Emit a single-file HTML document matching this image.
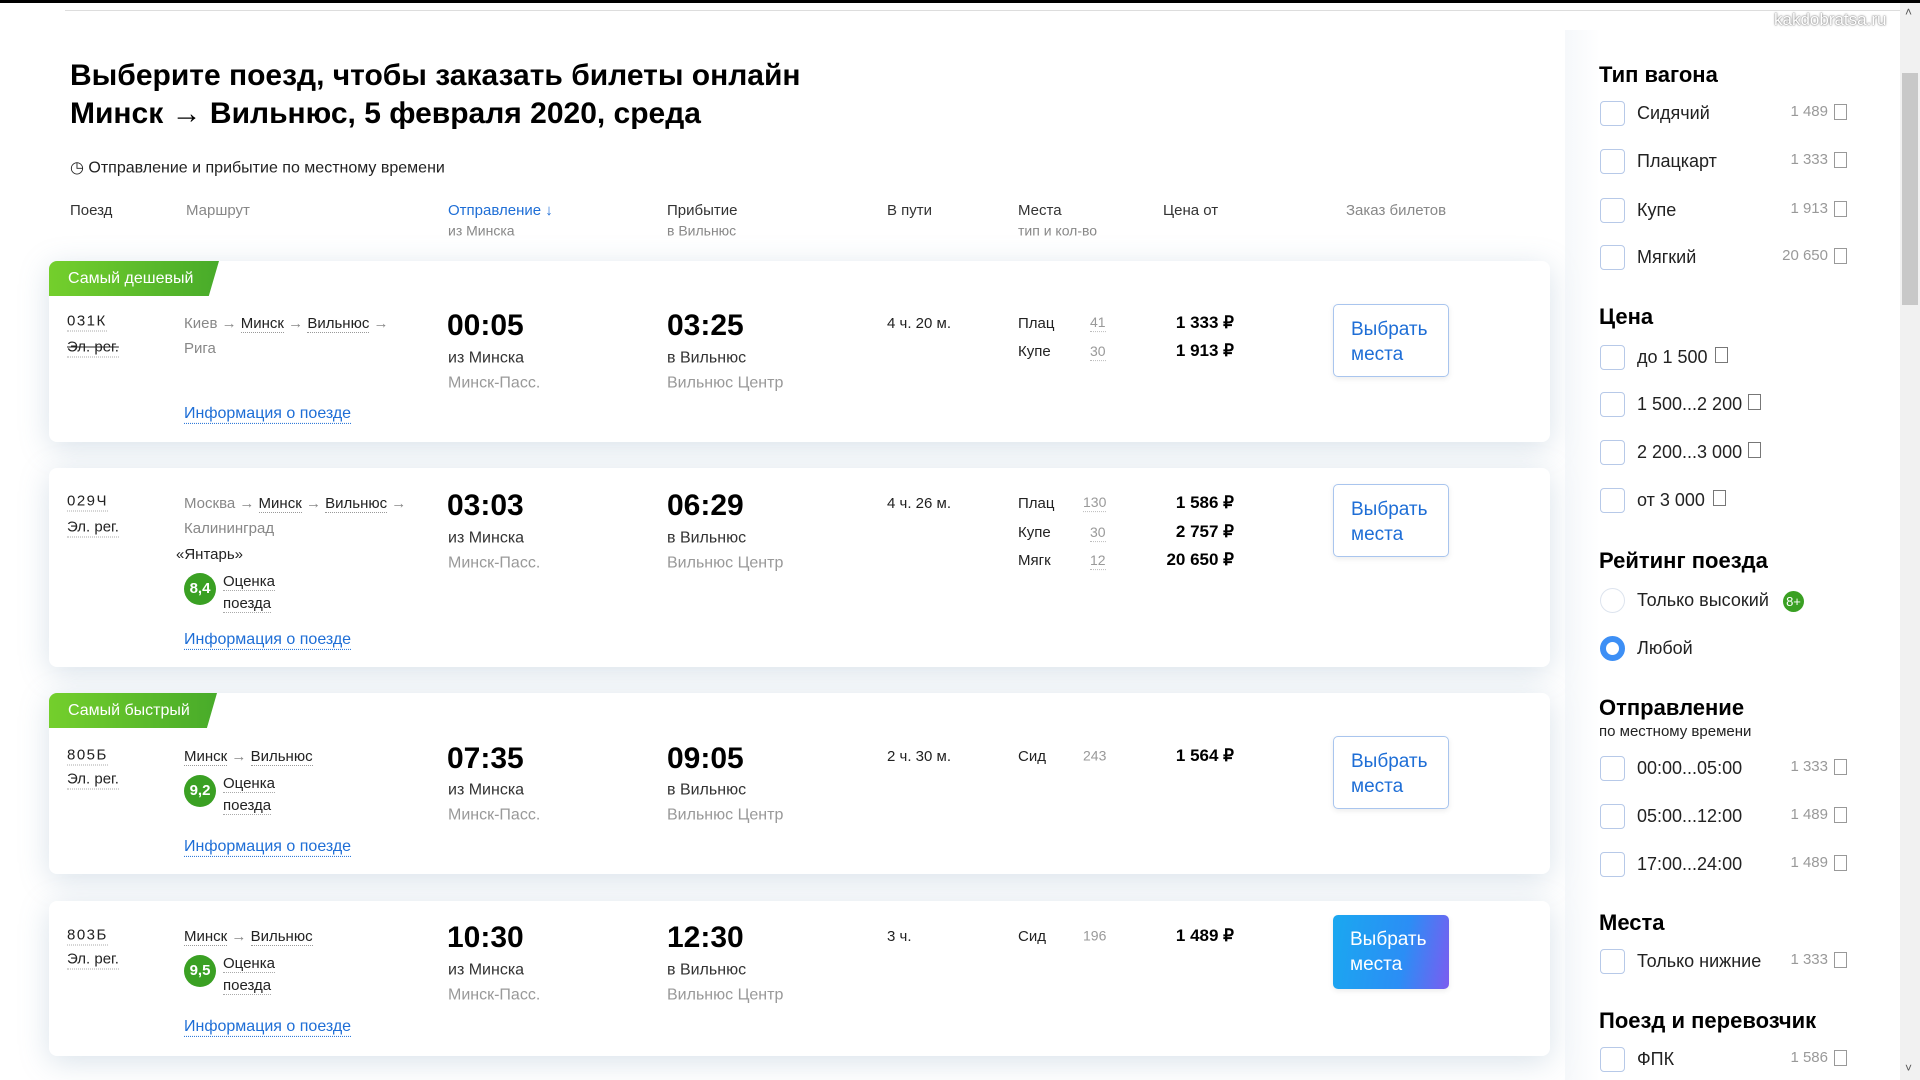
<!DOCTYPE html>
<html><head><meta charset="utf-8"><style>
*{margin:0;padding:0;box-sizing:border-box}
body{width:1920px;height:1080px;overflow:hidden;background:#fff;font-family:"Liberation Sans",sans-serif;color:#000;position:relative}
.c{position:absolute;transform:translateY(-50%);white-space:nowrap;line-height:1.2}
.card{position:absolute;left:49px;width:1501px;background:#fff;border-radius:8px;box-shadow:0 6px 30px rgba(120,150,180,.28)}
.badge{position:absolute;left:49px;height:35px;color:#fff;font-size:16px;line-height:35px;padding-left:19px;background:linear-gradient(90deg,#74cf2c,#48ab2a);border-radius:8px 0 8px 0;clip-path:polygon(0 0,100% 0,94% 100%,0 100%)}
.h{font-size:15px;color:#333}
.sub{font-size:14px;color:#888}
.num{font-size:15px;letter-spacing:1.5px;color:#222;border-bottom:1px dotted #aaa}
.reg{font-size:15px;color:#222;border-bottom:1px dotted #aaa}
.rt{font-size:15px;color:#888}
.rt u{text-decoration:none;color:#222;border-bottom:1px dotted #999}
.t{font-size:30px;font-weight:bold;color:#000}
.s1{font-size:16px;color:#333}
.s2{font-size:16px;color:#999}
.link{font-size:16px;color:#1e6ed6;border-bottom:1px dotted #1e6ed6}
.dur{font-size:15px;color:#222}
.pl{font-size:15px;color:#222}
.cnt{font-size:14px;color:#999;border-bottom:1px dotted #bbb}
.pr{font-size:17px;font-weight:bold;text-align:right;width:118px}
.btn{position:absolute;left:1333px;width:116px;border:1px solid #a9c5ee;border-radius:5px;color:#1e6ed6;font-size:19px;line-height:25px;padding:12px 0 0 17px;box-shadow:0 2px 6px rgba(0,0,0,.08)}
.rate{position:absolute;width:32px;height:32px;border-radius:50%;background:#3aa023;color:#fff;font-weight:bold;font-size:15px;text-align:center;line-height:32px}
.ev{font-size:15px;color:#222;line-height:22px;position:absolute}
.ev span{border-bottom:1px dotted #aaa}
.sh{font-size:22px;font-weight:bold}
.cb{position:absolute;left:1600px;width:25px;height:25px;border:1.5px solid #b7c9e8;border-radius:4px}
.lb{font-size:18px;color:#222;left:1637px}
.pp{font-size:15px;color:#999;right:92px;left:auto}
.ic{position:absolute;width:13px;height:16px;border:1px solid #999;left:1834px;background:#fff}
.ic2{position:absolute;width:13px;height:16px;border:1px solid #777}
</style></head><body>
<div style="position:absolute;left:0;top:0;width:1920px;height:3px;background:#000"></div>
<div style="position:absolute;left:65px;top:10px;width:1835px;height:1px;background:#ddd"></div>
<div style="position:absolute;left:1900px;top:3px;width:20px;height:1077px;background:#f1f1f1"></div>
<div style="position:absolute;left:1902px;top:73px;width:16px;height:232px;background:#c8c8c8"></div>
<div class="c" style="left:1905px;top:12px;font-size:12px;color:#555">˄</div>
<div class="c" style="left:1905px;top:1068px;font-size:12px;color:#555">˅</div>
<div class="c" style="left:1774px;top:20px;font-size:17px;color:#fff;text-shadow:0 0 2px #777,0 0 1px #777">kakdobratsa.ru</div>

<div class="c" style="left:70px;top:76px;font-size:30px;font-weight:bold">Выберите поезд, чтобы заказать билеты онлайн</div>
<div class="c" style="left:70px;top:114px;font-size:30px;font-weight:bold">Минск → Вильнюс, 5 февраля 2020, среда</div>
<div class="c" style="left:70px;top:168px;font-size:16px;color:#222">◷ Отправление и прибытие по местному времени</div>

<div class="c h" style="left:70px;top:211px">Поезд</div>
<div class="c h" style="left:186px;top:211px;color:#888">Маршрут</div>
<div class="c h" style="left:448px;top:211px;color:#1e6ed6">Отправление ↓</div>
<div class="c sub" style="left:448px;top:231px">из Минска</div>
<div class="c h" style="left:667px;top:211px">Прибытие</div>
<div class="c sub" style="left:667px;top:231px">в Вильнюс</div>
<div class="c h" style="left:887px;top:211px">В пути</div>
<div class="c h" style="left:1018px;top:211px">Места</div>
<div class="c sub" style="left:1018px;top:231px">тип и кол-во</div>
<div class="c h" style="left:1163px;top:211px">Цена от</div>
<div class="c h" style="left:1346px;top:211px;color:#888">Заказ билетов</div>

<div class="card" style="top:261px;height:181px"></div>
<div class="badge" style="top:261px;width:170px">Самый дешевый</div>
<div class="c num" style="left:67px;top:322px">031К</div>
<div class="c reg" style="left:67px;top:348px;text-decoration:line-through">Эл. рег.</div>
<div class="c rt" style="left:184px;top:324px">Киев → <u>Минск</u> → <u>Вильнюс</u> →</div>
<div class="c rt" style="left:184px;top:349px">Рига</div>
<div class="c t" style="left:447px;top:326px">00:05</div>
<div class="c s1" style="left:448px;top:358px">из Минска</div>
<div class="c s2" style="left:448px;top:383px">Минск-Пасс.</div>
<div class="c t" style="left:667px;top:326px">03:25</div>
<div class="c s1" style="left:667px;top:358px">в Вильнюс</div>
<div class="c s2" style="left:667px;top:383px">Вильнюс Центр</div>
<div class="c link" style="left:184px;top:414px">Информация о поезде</div>
<div class="c dur" style="left:887px;top:324px">4 ч. 20 м.</div>
<div class="c pl" style="left:1018px;top:324px">Плац</div><div class="c cnt" style="left:1090px;top:323px">41</div>
<div class="c pl" style="left:1018px;top:352px">Купе</div><div class="c cnt" style="left:1090px;top:352px">30</div>
<div class="c pr" style="left:1116px;top:323px">1 333 ₽</div>
<div class="c pr" style="left:1116px;top:351px">1 913 ₽</div>
<div class="btn" style="top:304px;height:73px">Выбрать<br>места</div>

<div class="card" style="top:468px;height:199px"></div>
<div class="c num" style="left:67px;top:502px">029Ч</div>
<div class="c reg" style="left:67px;top:528px">Эл. рег.</div>
<div class="c rt" style="left:184px;top:504px">Москва → <u>Минск</u> → <u>Вильнюс</u> →</div>
<div class="c rt" style="left:184px;top:529px">Калининград</div>
<div class="c" style="left:176px;top:555px;font-size:15px;color:#222">«Янтарь»</div>
<div class="rate" style="left:184px;top:573px">8,4</div>
<div class="ev" style="left:223px;top:571px"><span>Оценка</span><br><span>поезда</span></div>
<div class="c link" style="left:184px;top:640px">Информация о поезде</div>
<div class="c t" style="left:447px;top:506px">03:03</div>
<div class="c s1" style="left:448px;top:538px">из Минска</div>
<div class="c s2" style="left:448px;top:563px">Минск-Пасс.</div>
<div class="c t" style="left:667px;top:506px">06:29</div>
<div class="c s1" style="left:667px;top:538px">в Вильнюс</div>
<div class="c s2" style="left:667px;top:563px">Вильнюс Центр</div>
<div class="c dur" style="left:887px;top:504px">4 ч. 26 м.</div>
<div class="c pl" style="left:1018px;top:504px">Плац</div><div class="c cnt" style="left:1083px;top:503px">130</div>
<div class="c pl" style="left:1018px;top:533px">Купе</div><div class="c cnt" style="left:1090px;top:533px">30</div>
<div class="c pl" style="left:1018px;top:561px">Мягк</div><div class="c cnt" style="left:1090px;top:561px">12</div>
<div class="c pr" style="left:1116px;top:503px">1 586 ₽</div>
<div class="c pr" style="left:1116px;top:532px">2 757 ₽</div>
<div class="c pr" style="left:1116px;top:560px">20 650 ₽</div>
<div class="btn" style="top:484px;height:73px">Выбрать<br>места</div>

<div class="card" style="top:693px;height:181px"></div>
<div class="badge" style="top:693px;width:168px">Самый быстрый</div>
<div class="c num" style="left:67px;top:756px">805Б</div>
<div class="c reg" style="left:67px;top:780px">Эл. рег.</div>
<div class="c rt" style="left:184px;top:757px"><u>Минск</u> → <u>Вильнюс</u></div>
<div class="rate" style="left:184px;top:775px">9,2</div>
<div class="ev" style="left:223px;top:773px"><span>Оценка</span><br><span>поезда</span></div>
<div class="c link" style="left:184px;top:847px">Информация о поезде</div>
<div class="c t" style="left:447px;top:759px">07:35</div>
<div class="c s1" style="left:448px;top:790px">из Минска</div>
<div class="c s2" style="left:448px;top:815px">Минск-Пасс.</div>
<div class="c t" style="left:667px;top:759px">09:05</div>
<div class="c s1" style="left:667px;top:790px">в Вильнюс</div>
<div class="c s2" style="left:667px;top:815px">Вильнюс Центр</div>
<div class="c dur" style="left:887px;top:757px">2 ч. 30 м.</div>
<div class="c pl" style="left:1018px;top:757px">Сид</div><div class="c cnt" style="left:1083px;top:756px;border:0">243</div>
<div class="c pr" style="left:1116px;top:756px">1 564 ₽</div>
<div class="btn" style="top:736px;height:73px">Выбрать<br>места</div>

<div class="card" style="top:901px;height:155px"></div>
<div class="c num" style="left:67px;top:936px">803Б</div>
<div class="c reg" style="left:67px;top:960px">Эл. рег.</div>
<div class="c rt" style="left:184px;top:937px"><u>Минск</u> → <u>Вильнюс</u></div>
<div class="rate" style="left:184px;top:955px">9,5</div>
<div class="ev" style="left:223px;top:953px"><span>Оценка</span><br><span>поезда</span></div>
<div class="c link" style="left:184px;top:1027px">Информация о поезде</div>
<div class="c t" style="left:447px;top:938px">10:30</div>
<div class="c s1" style="left:448px;top:970px">из Минска</div>
<div class="c s2" style="left:448px;top:995px">Минск-Пасс.</div>
<div class="c t" style="left:667px;top:938px">12:30</div>
<div class="c s1" style="left:667px;top:970px">в Вильнюс</div>
<div class="c s2" style="left:667px;top:995px">Вильнюс Центр</div>
<div class="c dur" style="left:887px;top:937px">3 ч.</div>
<div class="c pl" style="left:1018px;top:937px">Сид</div><div class="c cnt" style="left:1083px;top:936px;border:0">196</div>
<div class="c pr" style="left:1116px;top:936px">1 489 ₽</div>
<div class="btn" style="top:915px;height:74px;border:0;color:#fff;background:linear-gradient(100deg,#1aa8f0,#2b8ef5 60%,#7b5cf0)">Выбрать<br>места</div>

<div style="position:absolute;left:1565px;top:30px;width:35px;height:1050px;background:linear-gradient(90deg,rgba(236,241,246,.5),rgba(255,255,255,0))"></div>
<div class="c sh" style="left:1599px;top:75px">Тип вагона</div>
<div class="cb" style="top:101px"></div><div class="c lb" style="top:114px">Сидячий</div><div class="c pp" style="top:112px">1 489</div><div class="ic" style="top:104px"></div>
<div class="cb" style="top:149px"></div><div class="c lb" style="top:162px">Плацкарт</div><div class="c pp" style="top:160px">1 333</div><div class="ic" style="top:152px"></div>
<div class="cb" style="top:198px"></div><div class="c lb" style="top:211px">Купе</div><div class="c pp" style="top:209px">1 913</div><div class="ic" style="top:201px"></div>
<div class="cb" style="top:245px"></div><div class="c lb" style="top:258px">Мягкий</div><div class="c pp" style="top:256px">20 650</div><div class="ic" style="top:248px"></div>

<div class="c sh" style="left:1599px;top:317px">Цена</div>
<div class="cb" style="top:345px"></div><div class="c lb" style="top:358px">до 1 500</div><div class="ic2" style="left:1715px;top:347px"></div>
<div class="cb" style="top:392px"></div><div class="c lb" style="top:405px">1 500...2 200</div><div class="ic2" style="left:1748px;top:394px"></div>
<div class="cb" style="top:440px"></div><div class="c lb" style="top:453px">2 200...3 000</div><div class="ic2" style="left:1748px;top:442px"></div>
<div class="cb" style="top:488px"></div><div class="c lb" style="top:501px">от 3 000</div><div class="ic2" style="left:1713px;top:490px"></div>

<div class="c sh" style="left:1599px;top:561px">Рейтинг поезда</div>
<div class="cb" style="top:588px;border-radius:50%;border-color:#dde4ee"></div><div class="c lb" style="top:601px">Только высокий</div>
<div style="position:absolute;left:1783px;top:591px;width:21px;height:21px;border-radius:50%;background:#3aa023;color:#fff;font-size:13px;line-height:21px;text-align:center">8+</div>
<div class="cb" style="top:636px;border-radius:50%;border:6px solid #3d8ff5"></div><div class="c lb" style="top:649px">Любой</div>

<div class="c sh" style="left:1599px;top:708px">Отправление</div>
<div class="c" style="left:1599px;top:732px;font-size:15px;color:#222">по местному времени</div>
<div class="cb" style="top:756px"></div><div class="c lb" style="top:769px">00:00...05:00</div><div class="c pp" style="top:767px">1 333</div><div class="ic" style="top:759px"></div>
<div class="cb" style="top:804px"></div><div class="c lb" style="top:817px">05:00...12:00</div><div class="c pp" style="top:815px">1 489</div><div class="ic" style="top:807px"></div>
<div class="cb" style="top:852px"></div><div class="c lb" style="top:865px">17:00...24:00</div><div class="c pp" style="top:863px">1 489</div><div class="ic" style="top:855px"></div>

<div class="c sh" style="left:1599px;top:923px">Места</div>
<div class="cb" style="top:949px"></div><div class="c lb" style="top:962px">Только нижние</div><div class="c pp" style="top:960px">1 333</div><div class="ic" style="top:952px"></div>

<div class="c sh" style="left:1599px;top:1021px">Поезд и перевозчик</div>
<div class="cb" style="top:1047px"></div><div class="c lb" style="top:1060px">ФПК</div><div class="c pp" style="top:1058px">1 586</div><div class="ic" style="top:1050px"></div>
</body></html>
